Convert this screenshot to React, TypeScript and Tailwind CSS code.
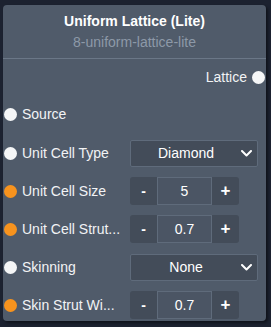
import React from "react";

const font = { fontFamily: '"Liberation Sans", Arial, sans-serif' };

function Dot({ orange }: { orange?: boolean }) {
  return (
    <span
      className={
        orange
          ? "block w-[13px] h-[13px] rounded-full shrink-0 bg-[#f7931e]"
          : "block w-[13px] h-[13px] rounded-full shrink-0 bg-[#f5f6f7]"
      }
    />
  );
}

function Chevron() {
  return (
    <svg width="11" height="7" viewBox="0 0 11 7" className="shrink-0">
      <path d="M1 1 L5.5 5.5 L10 1" fill="none" stroke="#ffffff" strokeWidth="2" strokeLinecap="round" strokeLinejoin="round" />
    </svg>
  );
}

function Select({ value }: { value: string }) {
  return (
    <div className="ml-[6px] w-[128px] h-[27px] shrink-0 flex items-center bg-[#434c59] border border-[#5f6b7b] rounded-[2px] pr-[5px]">
      <span className="flex-1 text-center text-[14px] text-white leading-5">{value}</span>
      <Chevron />
    </div>
  );
}

function NumberInput({ value }: { value: string }) {
  return (
    <div className="ml-[6px] flex h-[28px] shrink-0">
      <div className="w-[27px] h-full flex items-center justify-center bg-[#434c59] rounded-l-[3px] text-white text-[14px] font-bold">-</div>
      <div className="w-[55px] h-full flex items-center justify-center border border-[#5f6b7b] bg-[#4b5564] text-white text-[14px]">{value}</div>
      <div className="w-[27px] h-full flex items-center justify-center bg-[#434c59] rounded-r-[3px] text-white text-[17px] font-bold">+</div>
    </div>
  );
}

function Row({ label, orange, children }: { label: string; orange?: boolean; children?: React.ReactNode }) {
  return (
    <div className="flex items-center h-[28px] pl-[1px]">
      <Dot orange={orange} />
      <span className="ml-[5px] w-[102px] shrink-0 whitespace-nowrap text-[14px] leading-5 text-[#f2f3f5]">{label}</span>
      {children}
    </div>
  );
}

export default function App() {
  return (
    <div className="w-[271px] h-[327px] bg-[#1c2230] pl-[3px] pt-[5px] overflow-hidden" style={font}>
      <div className="w-[263px] h-[316px] bg-[#505b6a] rounded-[4px] shadow-[2px_2px_3px_rgba(0,0,0,0.45)] flex flex-col">
        <div className="pt-[6px] pb-[6px] border-b border-[#6b7787] flex flex-col items-center">
          <div className="text-[14px] leading-5 font-bold text-white">Uniform Lattice (Lite)</div>
          <div className="mt-[1px] text-[14px] leading-5 text-[#8d99a8]">8-uniform-lattice-lite</div>
        </div>
        <div className="mt-[8px] h-5 flex items-center justify-end pr-[1px]">
          <span className="text-[14px] leading-5 text-[#f2f3f5]">Lattice</span>
          <span className="ml-[5px]"><Dot /></span>
        </div>
        <div className="mt-[17px] h-5 flex items-center pl-[1px]">
          <Dot />
          <span className="ml-[5px] text-[14px] leading-5 text-[#f2f3f5]">Source</span>
        </div>
        <div className="mt-[15px] flex flex-col gap-[10px]">
          <Row label="Unit Cell Type"><Select value="Diamond" /></Row>
          <Row label="Unit Cell Size" orange><NumberInput value="5" /></Row>
          <Row label="Unit Cell Strut..." orange><NumberInput value="0.7" /></Row>
          <Row label="Skinning"><Select value="None" /></Row>
          <Row label="Skin Strut Wi..." orange><NumberInput value="0.7" /></Row>
        </div>
      </div>
    </div>
  );
}
